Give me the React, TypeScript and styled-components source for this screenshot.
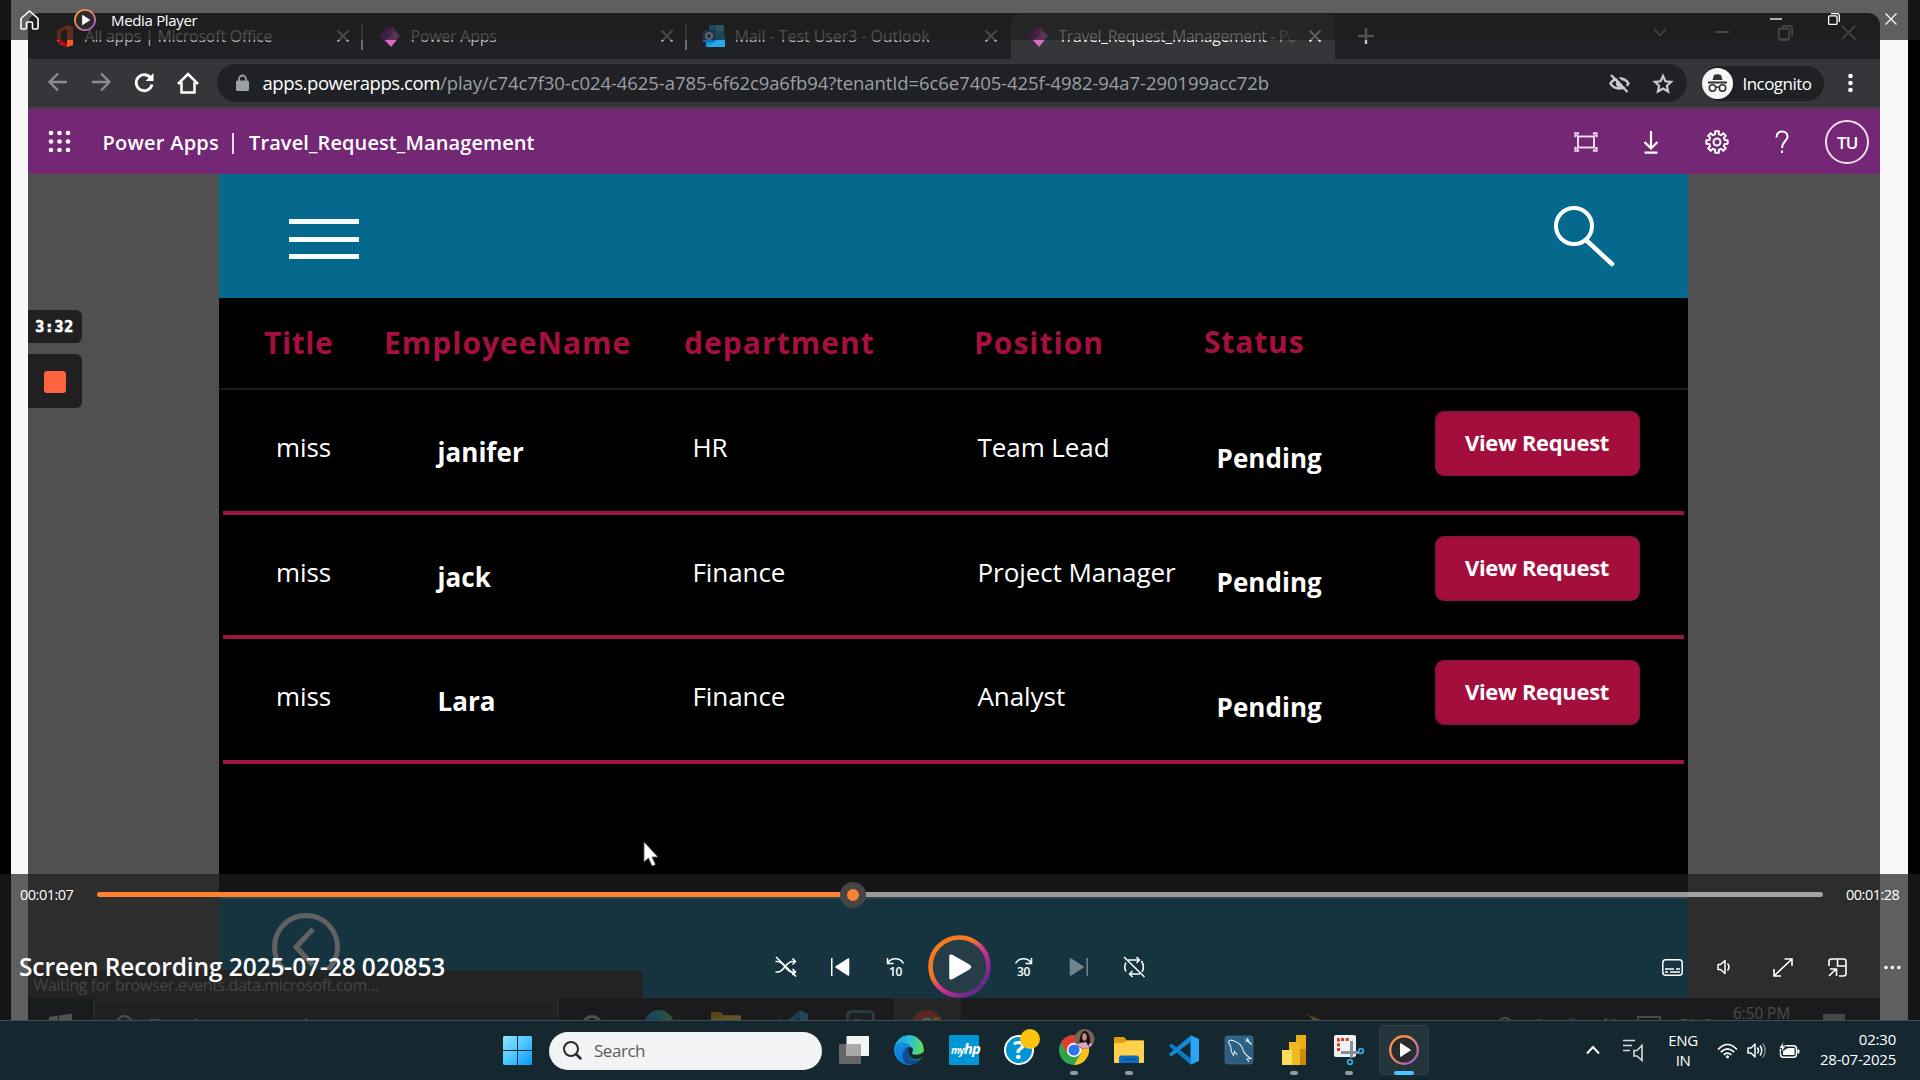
import React from "react";
import styled, { createGlobalStyle, css } from "styled-components";

const GlobalStyle = createGlobalStyle`
  html, body { margin: 0; padding: 0; background: #000; }
  * { box-sizing: border-box; }
  svg { display: block; flex: none; overflow: visible; }
  body { font-family: "Open Sans", "Noto Sans", sans-serif; }
`;

const Desktop = styled.div`
  width: 1920px;
  height: 1080px;
  display: flex;
  flex-direction: column;
  overflow: hidden;
  background: #000;
`;

/* ---------- Player window ---------- */

const PlayerWindow = styled.main`
  position: relative;
  height: 1020px;
  display: flex;
  justify-content: center;
  overflow: hidden;
  padding: 0 12px 0 11px;
`;

const VideoFrame = styled.div`
  flex: 1;
  background: #f8f8f8;
  padding: 13px 28px 0 16.5px;
`;

const Browser = styled.div`
  position: relative;
  height: 1007px;
  display: flex;
  flex-direction: column;
  overflow: hidden;
  border-radius: 12px 12px 0 0;
  background: #202124;
`;

const TabStrip = styled.div`
  height: 46px;
  display: flex;
  align-items: stretch;
  padding-left: 11px;
`;

const TabBox = styled.div<{ $active?: boolean; $divider?: boolean }>`
  width: 324px;
  display: flex;
  align-items: center;
  gap: 10px;
  padding: 0 14px 0 16px;
  border-radius: 12px 12px 0 0;
  background: ${(p) => (p.$active ? "#35363a" : "transparent")};
  ${(p) =>
    p.$divider &&
    css`
      background: linear-gradient(#6b6d70, #6b6d70) 100% 11px / 2px 26px no-repeat;
      border-radius: 0;
    `}
`;

const TabLabel = styled.span<{ $active?: boolean; $track: number }>`
  flex: 1;
  overflow: hidden;
  white-space: nowrap;
  font-size: 16px;
  line-height: 26px;
  letter-spacing: ${(p) => p.$track}px;
  color: ${(p) => (p.$active ? "#f1f3f4" : "#b4b8bd")};
  ${(p) => p.$active && "mask-image: linear-gradient(90deg, #000 88%, transparent);"}
`;

const StripTools = styled.div`
  flex: 1;
  display: flex;
  align-items: center;
  padding-left: 23px;
`;

const BrowserControls = styled.div`
  margin-left: auto;
  width: 252px;
  display: flex;
  justify-content: space-between;
  align-items: center;
  padding: 0 24px 8px 25px;
`;

const Toolbar = styled.div`
  height: 50px;
  display: flex;
  align-items: center;
  background: #35363a;
  border-bottom: 2px solid #47434b;
`;

const NavIcons = styled.div`
  width: 189px;
  display: flex;
  justify-content: space-between;
  padding: 0 18px 0 20px;
`;

const AddressBar = styled.div`
  width: 1470px;
  height: 38px;
  display: flex;
  align-items: center;
  border-radius: 19px;
  background: #202124;
  padding: 0 14px 0 19px;
  gap: 23px;
`;

const Url = styled.div`
  margin-left: -9px;
  flex: 1;
  white-space: nowrap;
  font-size: 18.5px;
  line-height: 28px;
  letter-spacing: -0.08px;
  color: #9aa0a6;
`;

const Host = styled.span`
  color: #fff;
  letter-spacing: -0.42px;
`;

const Incognito = styled.div`
  width: 122px;
  height: 35px;
  margin-left: 15px;
  display: flex;
  align-items: center;
  gap: 10px;
  border-radius: 18px;
  background: #202124;
  color: #fff;
  font-size: 17px;
  font-weight: 500;
  letter-spacing: -0.55px;
`;

const KebabSlot = styled.div`
  flex: 1;
  display: flex;
  justify-content: center;
  padding-right: 3px;
`;

const SuiteBar = styled.div`
  height: 65px;
  display: flex;
  align-items: center;
  padding: 1px 0 0 21px;
  background: #742774;
  color: #fff;
`;

const SuiteTitle = styled.div`
  display: flex;
  align-items: center;
  margin-left: 32px;
  padding-top: 2px;
  font-size: 20px;
  font-weight: 600;
  line-height: 28px;
  letter-spacing: 0.1px;
  white-space: nowrap;
`;

const ProductName = styled.span`
  letter-spacing: 0.25px;
`;

const SuiteDivider = styled.span`
  width: 2px;
  height: 21px;
  margin: 0 15px 0 13px;
  background: #e9d6e9;
`;

const SuiteActions = styled.div`
  margin-left: auto;
  display: grid;
  grid-template-columns: repeat(5, 65.3px);
  align-items: center;
  justify-items: center;
`;

const UserBadge = styled.div`
  width: 44px;
  height: 44px;
  border: 2px solid #f0dff0;
  border-radius: 50%;
  display: grid;
  place-items: center;
  font-size: 17px;
  font-weight: 600;
  letter-spacing: -0.8px;
`;

const AppStage = styled.div`
  height: 824px;
  display: flex;
  justify-content: center;
  padding: 0 192px 0 191.5px;
  background: #505050;
`;

const AppScreen = styled.div`
  flex: 1;
  display: flex;
  flex-direction: column;
  background: #000;
`;

const AppHeader = styled.div`
  height: 124px;
  display: flex;
  justify-content: space-between;
  align-items: flex-start;
  padding: 45px 73px 0 70px;
  background: #05698e;
`;

const Burger = styled.div`
  width: 70px;
  height: 40px;
  display: flex;
  flex-direction: column;
  justify-content: space-between;
`;

const BurgerLine = styled.span`
  height: 5px;
  background: #f8fbfc;
`;

const SearchGlyph = styled.div`
  margin-top: -14px;
`;

const ColumnHeads = styled.div`
  height: 92px;
  display: grid;
  grid-template-columns: 120px 300px 290px 230px 200px;
  padding: 25px 0 0 45px;
  border-bottom: 2px solid #181818;
`;

const ColumnHead = styled.div<{ $track: number; $raise?: boolean }>`
  font-size: 30px;
  font-weight: 700;
  line-height: 40px;
  letter-spacing: ${(p) => p.$track}px;
  margin-top: ${(p) => (p.$raise ? -1 : 0)}px;
  color: #a60f3f;
`;

const Gallery = styled.div`
  flex: 1;
  padding: 0 4px;
`;

const RequestRow = styled.div`
  height: 124.5px;
  display: grid;
  grid-template-columns: 161.500px 255px 285px 239px 219.500px 205px;
  align-items: start;
  padding-left: 53px;
  border-bottom: 4px solid #9c1540;
`;

const Cell = styled.div<{ $top: number; $bold?: boolean }>`
  padding-top: ${(p) => p.$top}px;
  font-size: 26px;
  line-height: 36px;
  font-weight: ${(p) => (p.$bold ? 700 : 400)};
  letter-spacing: ${(p) => (p.$bold ? 0.05 : -0.07)}px;
  white-space: nowrap;
  color: #fff;
`;

const ViewButton = styled.button`
  margin: 21px 0 0 -1px;
  width: 205px;
  height: 65px;
  border: 2px solid #8d1239;
  border-radius: 9px;
  background: #a40e3d;
  color: #fff;
  font: 700 22px/30px "Open Sans", sans-serif;
  letter-spacing: -0.33px;
  padding: 0 1px 3px 0;
`;

const AppFooter = styled.div`
  height: 101px;
  padding: 14px 0 0 53px;
  border-top: 2px solid #5b93a8;
  background: #056a8f;
`;

const StatusBubble = styled.div`
  position: absolute;
  left: 0;
  top: 957px;
  width: 615px;
  height: 28px;
  padding-left: 6px;
  border-radius: 0 6px 0 0;
  background: #2f3034;
  color: #9aa0a6;
  font-size: 16px;
  line-height: 30px;
  letter-spacing: -0.36px;
`;

const RecorderStack = styled.div`
  position: absolute;
  left: 0;
  top: 297px;
  display: flex;
  flex-direction: column;
  gap: 11px;
`;

const RecorderTile = styled.div<{ $h: number }>`
  width: 54px;
  height: ${(p) => p.$h}px;
  border-radius: 0 6px 6px 0;
  display: grid;
  place-items: center;
  background: #202020;
  color: #fff;
  font: 700 15px "DejaVu Sans Mono", monospace;
  letter-spacing: 0.6px;
  padding-top: 1px;
  -webkit-text-stroke: 0.6px #fff;
`;

const StopSquare = styled.span`
  width: 22px;
  height: 22px;
  border-radius: 3px;
  background: #ff623e;
`;

const MousePointer = styled.div`
  position: absolute;
  left: 615px;
  top: 828px;
`;

const InnerTaskbar = styled.div`
  height: 22px;
  overflow: hidden;
  background: #17171c;
`;

const InnerRow = styled.div`
  height: 54px;
  display: flex;
  align-items: center;
`;

const InnerStart = styled.div`
  width: 65px;
  display: flex;
  justify-content: center;
  align-items: center;
  align-self: stretch;
  background: #101a1b;
`;

const InnerSearch = styled.div`
  width: 466px;
  height: 52px;
  display: flex;
  align-items: center;
  gap: 14px;
  padding-left: 21px;
  border: 2px solid #444;
  background: #2b2b2b;
  color: #a8a8a8;
  font-size: 18px;
`;

const InnerCell = styled.div<{ $active?: boolean }>`
  width: 67px;
  height: 54px;
  display: grid;
  place-items: center;
  background: ${(p) => (p.$active ? "#3b3b3f" : "transparent")};
`;

const InnerTray = styled.div`
  flex: 1;
  height: 54px;
  display: flex;
  align-items: center;
  gap: 19px;
  padding-left: 342px;
  color: #b0b0b0;
  font-size: 16px;
`;

const InnerCloudSlot = styled.span`
  width: 136px;
`;

const InnerClock = styled.span`
  align-self: flex-start;
  margin: 2px 14px 0 2px;
  font-size: 15.5px;
  line-height: 26px;
  letter-spacing: -0.15px;
`;

/* ---------- Player chrome laid over the video ---------- */

const TitleOverlay = styled.header`
  position: absolute;
  inset: 0 0 auto 0;
  height: 40px;
  display: flex;
  align-items: center;
  padding: 0 23px 0 20px;
  background: rgba(30, 30, 30, 0.7);
  color: #fff;
`;

const AppName = styled.span`
  margin-left: 15px;
  font-size: 15px;
  line-height: 22px;
  letter-spacing: -0.33px;
`;

const LogoSlot = styled.span`
  margin-left: 35px;
`;

const CaptionButtons = styled.div`
  margin-left: auto;
  width: 127px;
  display: flex;
  justify-content: space-between;
  padding-bottom: 2px;
`;

const ControlsOverlay = styled.footer`
  position: absolute;
  inset: auto 0 0 0;
  height: 146px;
  display: flex;
  flex-direction: column;
  background: rgba(30, 30, 30, 0.7);
  color: #fff;
`;

const Timeline = styled.div`
  height: 41px;
  display: flex;
  align-items: center;
  justify-content: space-between;
  padding: 0 20px;
`;

const TimeText = styled.span`
  width: 77px;
  font-size: 14.5px;
  line-height: 20px;
  letter-spacing: -0.5px;

  &:last-child {
    width: 54px;
  }
`;

const Track = styled.div`
  width: 1726px;
  height: 5px;
  display: flex;
  align-items: center;
  margin-right: 23px;
`;

const Played = styled.div`
  height: 5px;
  border-radius: 3px 0 0 3px;
  background: #ff8232;
`;

const Thumb = styled.div`
  width: 26px;
  height: 26px;
  margin: 0 -13px;
  flex: none;
  z-index: 1;
  border: 7px solid #454545;
  border-radius: 50%;
  background: #ff8232;
`;

const Remaining = styled.div`
  flex: 1;
  height: 5px;
  border-radius: 0 3px 3px 0;
  background: rgba(255, 255, 255, 0.57);
`;

const TransportRow = styled.div`
  height: 104px;
  display: grid;
  grid-template-columns: 758px 403px 1fr;
  align-items: center;
`;

const MediaTitle = styled.h1`
  margin: 0;
  padding-left: 19px;
  font-size: 24.5px;
  font-weight: 600;
  line-height: 34px;
  letter-spacing: -0.1px;
  white-space: nowrap;
`;

const ButtonGroup = styled.div`
  display: flex;
  align-items: center;
  justify-content: flex-end;
`;

const ControlButton = styled.div<{ $wide?: boolean; $dim?: boolean }>`
  width: ${(p) => (p.$wide ? 73 : 55)}px;
  height: 64px;
  display: grid;
  place-items: center;
  opacity: ${(p) => (p.$dim ? 0.4 : 1)};
`;

/* ---------- Windows taskbar ---------- */

const Taskbar = styled.nav`
  height: 60px;
  display: flex;
  align-items: center;
  padding-left: 490px;
  border-top: 1px solid #3c4c52;
  background: #15282f;
  color: #fff;
`;

const TaskTile = styled.div`
  width: 55px;
  height: 59px;
  display: grid;
  grid-template-rows: 50px 4px;
  align-content: start;
  justify-items: center;
  align-items: center;
  padding-top: 4px;
`;

const ActiveTile = styled.div`
  width: 50px;
  height: 50px;
  border: 1px solid #2f3f45;
  border-radius: 5px;
  display: grid;
  place-items: center;
  background: #24343b;
`;

const Indicator = styled.span<{ $active?: boolean }>`
  width: ${(p) => (p.$active ? 20 : 8)}px;
  height: 4px;
  margin-top: -9px;
  border-radius: 2px;
  background: ${(p) => (p.$active ? "#4cc2ff" : "#949c9f")};
`;

const SearchPill = styled.div`
  width: 273px;
  height: 38px;
  margin: 0 4px;
  display: flex;
  align-items: center;
  gap: 12px;
  padding-left: 14px;
  border-radius: 19px;
  background: #f2f3f5;
  color: #5a5b5d;
  font-size: 17px;
  letter-spacing: -0.47px;
`;

const Tray = styled.div`
  margin-left: auto;
  width: 338px;
  display: flex;
  align-items: center;
  padding-right: 24px;
`;

const TrayItem = styled.div<{ $w: number }>`
  width: ${(p) => p.$w}px;
  display: grid;
  place-items: center;
`;

const Clock = styled.div`
  margin-left: auto;
  padding-bottom: 3px;
  font-size: 15px;
  line-height: 20px;
  letter-spacing: -0.22px;
  text-align: right;
  white-space: nowrap;
`;

const Language = styled.div`
  width: 42px;
  margin-right: 12px;
  padding-bottom: 2px;
  font-size: 15px;
  line-height: 20px;
  letter-spacing: -0.4px;
  text-align: center;
`;

/* ---------- Icons ---------- */

const Cross = ({ s = 12, c = "#fff", w = 1.3 }: { s?: number; c?: string; w?: number }) => (
  <svg width={s} height={s} viewBox="0 0 12 12">
    <path d="M.5.5l11 11M11.5.5l-11 11" stroke={c} strokeWidth={(w * 12) / s} fill="none" />
  </svg>
);

const Restore = ({ s = 12, c = "#fff", w = 1.3 }: { s?: number; c?: string; w?: number }) => (
  <svg width={s} height={s} viewBox="0 0 12 12" fill="none" stroke={c} strokeWidth={(w * 12) / s}>
    <rect x=".6" y="2.8" width="8.4" height="8.6" rx="1" />
    <path d="M3 .7h6.3a2 2 0 0 1 2 2v6.3" />
  </svg>
);

const OfficeIcon = () => (
  <svg width="20" height="22" viewBox="0 0 20 22">
    <path d="M12 0l6 2v18l-6 2-9-3.500 9 1V4.500L6 6v9l-4 2V5z" fill="#e64a19" />
    <path d="M12 0l6 2v18l-6 2z" fill="#ff5722" />
    <path d="M2 17l4-2 6 4.500V22z" fill="#c4001d" />
  </svg>
);

const PowerAppsIcon = () => (
  <svg width="22" height="22" viewBox="0 0 22 22">
    <path d="M9 0l9 9-8 11L0 11z" fill="#8a1d84" />
    <path d="M13 2l8 9-9 11-6-7 7-5z" fill="#d86bcb" />
    <path d="M13 2l-5 6 5 4 2-9z" fill="#a93ba1" />
  </svg>
);

const OutlookIcon = () => (
  <svg width="22" height="22" viewBox="0 0 22 22">
    <rect x="6" y="0" width="15" height="12" fill="#28a8ea" />
    <rect x="13" y="0" width="8" height="6" fill="#50d9ff" />
    <path d="M3 11l19-1v12H3z" fill="#1490df" />
    <path d="M3 22L22 11v11z" fill="#28a8ea" />
    <rect x="0" y="5" width="12" height="12" rx="1" fill="#0f6cbd" />
    <circle cx="6" cy="11" r="3" fill="none" stroke="#fff" strokeWidth="2" />
  </svg>
);

const Arrow = ({ flip = false }: { flip?: boolean }) => (
  <svg width="20" height="20" viewBox="0 0 20 20" transform={flip ? "scale(-1 1)" : undefined}>
    <path d="M19 10H2M10 1.500L1.500 10l8.500 8.500" stroke="#8a8c90" strokeWidth="2.400" fill="none" />
  </svg>
);

const Reload = () => (
  <svg width="20" height="20" viewBox="0 0 20 20">
    <path d="M17 6.500A8 8 0 1 0 18 12.500" stroke="#fff" strokeWidth="2.800" fill="none" />
    <path d="M19.500 1v8h-8z" fill="#fff" />
  </svg>
);

const ChromeHome = () => (
  <svg width="22" height="22" viewBox="0 0 22 22">
    <path d="M4.500 10v10.500h13V10M1 12L11 2l10 10" stroke="#fff" strokeWidth="2.500" fill="none" />
  </svg>
);

const Lock = () => (
  <svg width="13" height="16" viewBox="0 0 13 16">
    <rect x="0" y="5.500" width="13" height="10.500" rx="1.500" fill="#9aa0a6" />
    <path d="M3 6V4a3.500 3.500 0 0 1 7 0v2" stroke="#9aa0a6" strokeWidth="1.800" fill="none" />
  </svg>
);

const EyeOff = () => (
  <svg width="21" height="19" viewBox="0 0 21 19" fill="none" stroke="#c8cacd">
    <path d="M1.500 9.500C5 3 16 3 19.500 9.500 16 16 5 16 1.500 9.500z" strokeWidth="2.600" />
    <circle cx="10.500" cy="9.500" r="3.200" fill="#c8cacd" />
    <path d="M4 -1l17 18" stroke="#202124" strokeWidth="2.500" />
    <path d="M2 1l16.500 17" strokeWidth="2.400" />
  </svg>
);

const Star = () => (
  <svg width="20" height="19" viewBox="0 0 20 19">
    <path d="M10 2l2.400 5.300 5.700.6-4.200 3.900 1.200 5.700L10 14.600l-5.100 2.900 1.200-5.700L1.900 7.900l5.700-.6z" fill="none" stroke="#c8cacd" strokeWidth="2.200" />
  </svg>
);

const IncognitoIcon = () => (
  <svg width="31" height="31" viewBox="0 0 31 31">
    <circle cx="15.500" cy="15.500" r="15.500" fill="#f5f6f7" />
    <path d="M10.500 12l1.500-5q3.500-1.500 7 0l1.500 5z" fill="#303134" />
    <path d="M6 14.500h19" stroke="#303134" strokeWidth="2" />
    <g fill="none" stroke="#303134" strokeWidth="1.500">
      <circle cx="10.500" cy="20" r="3.200" />
      <circle cx="20.500" cy="20" r="3.200" />
      <path d="M13.700 19.500q1.800-1 3.600 0" />
    </g>
  </svg>
);

const Waffle = () => (
  <svg width="22" height="22" viewBox="0 0 22 22" fill="#fff">
    {[2, 10.5, 19].map((y) => [2, 10.5, 19].map((x) => <circle key={`${x}-${y}`} cx={x} cy={y} r="2.300" />))}
  </svg>
);

const FitScreen = () => (
  <svg width="24" height="20" viewBox="0 0 24 20" fill="none" stroke="#f3dff3" strokeWidth="1.900">
    <rect x="4" y="4.500" width="16" height="11" />
    <path d="M1 5l4-4M19 1l4 4M23 15l-4 4M5 19l-4-4M1 5V1h4M19 1h4v4M23 15v4h-4M5 19H1v-4" strokeWidth="1.300" />
  </svg>
);

const Download = () => (
  <svg width="16" height="23" viewBox="0 0 16 23" fill="none" stroke="#fff" strokeWidth="2.200">
    <path d="M8 0v17M1.500 11L8 17.500l6.500-6.500M1.500 21.700h13" />
  </svg>
);

const gearPath = (() => {
  const pts: string[] = [];
  for (let i = 0; i < 8; i++) {
    const base = (i * Math.PI) / 4;
    [
      [-0.24, 8],
      [-0.17, 10.8],
      [0.17, 10.8],
      [0.24, 8],
    ].forEach(([d, r]) => pts.push(`${(12 + r * Math.sin(base + d)).toFixed(2)} ${(12 - r * Math.cos(base + d)).toFixed(2)}`));
  }
  return `M${pts.join("L")}Z`;
})();

const Gear = () => (
  <svg width="24" height="24" viewBox="0 0 24 24" fill="none" stroke="#fff" strokeWidth="2" strokeLinejoin="round">
    <path d={gearPath} />
    <circle cx="12" cy="12" r="3.500" />
  </svg>
);

const Help = () => (
  <svg width="14" height="24" viewBox="0 0 14 24" fill="none" stroke="#fff" strokeWidth="2">
    <path d="M1.500 7.500C1 -.5 13-.5 12.500 7c-.3 4-5.500 4.500-5.500 11" />
    <path d="M7 20.500v2.500" />
  </svg>
);

const BigSearch = () => (
  <svg width="62" height="62" viewBox="0 0 62 62" fill="none" stroke="#fff" strokeWidth="4">
    <circle cx="21" cy="21" r="18" />
    <path d="M33 35l26 24" strokeWidth="4.500" strokeLinecap="round" />
  </svg>
);

const BackCircle = () => (
  <svg width="68" height="68" viewBox="0 0 68 68" fill="none" stroke="#fff" strokeWidth="5">
    <circle cx="34" cy="34" r="31.500" />
    <path d="M41 16L24 34l17 18" />
  </svg>
);

const PointerIcon = () => (
  <svg width="16" height="26" viewBox="0 0 16 26">
    <path d="M1 1v20l4.500-4 3.500 8 3.500-1.500-3.500-7.500h6z" fill="#fff" stroke="#555" strokeWidth=".8" />
  </svg>
);

const HomeOutline = () => (
  <svg width="19" height="20" viewBox="0 0 19 20">
    <path d="M1 8.500L9.500 1 18 8.500V18q0 1-1 1h-3.500q-1 0-1-1v-5q0-1-1-1h-4q-1 0-1 1v5q0 1-1 1H2q-1 0-1-1z" fill="none" stroke="#fff" strokeWidth="1.600" strokeLinejoin="round" />
  </svg>
);

const PlayerLogo = ({ s, id }: { s: number; id: string }) => (
  <svg width={s} height={s} viewBox="0 0 30 30">
    <defs>
      <linearGradient id={id} x1="0" y1="0" x2="1" y2="1">
        <stop offset="0" stopColor="#ff9a35" />
        <stop offset=".5" stopColor="#e0846f" />
        <stop offset="1" stopColor="#9055d8" />
      </linearGradient>
    </defs>
    <circle cx="15" cy="15" r="13.800" fill="#2b2b2c" stroke={`url(#${id})`} strokeWidth="2.400" />
    <path d="M11.500 8.500l10 6.500-10 6.500z" fill="#fff" stroke="#fff" strokeLinejoin="round" />
  </svg>
);

const Shuffle = () => (
  <svg width="22" height="20" viewBox="0 0 22 20" fill="none" stroke="#fff" strokeWidth="1.500">
    <path d="M.5 4.500h2c7 0 8 10.500 15 10.500h3M.5 15h2c7 0 8-10.500 15-10.500h3M17.500 1.500l3 3-3 3M17.500 12l3 3-3 3" />
    <path d="M1 0l20 19.500" strokeWidth="1.600" />
  </svg>
);

const Previous = ({ flip = false }: { flip?: boolean }) => (
  <svg width="19" height="18" viewBox="0 0 19 18" transform={flip ? "scale(-1 1)" : undefined}>
    <rect width="1.500" height="18" fill="#fff" />
    <path d="M17.500 1v16L5 9z" fill="#fff" stroke="#fff" strokeWidth="1.500" strokeLinejoin="round" />
  </svg>
);

const SkipText = styled.text`
  font: 600 12px "Open Sans", sans-serif;
  letter-spacing: -0.3px;
  fill: #fff;
  text-anchor: middle;
`;

const Skip = ({ label, flip = false }: { label: string; flip?: boolean }) => (
  <svg width="19" height="20" viewBox="0 0 19 20">
    <path
      d="M1.500 1v5.500h6M1.500 6.500C5 .3 14 .3 17.500 6.500"
      transform={flip ? "translate(19 0) scale(-1 1)" : undefined}
      fill="none"
      stroke="#fff"
      strokeWidth="1.500"
    />
    <SkipText x="9.500" y="18.600">{label}</SkipText>
  </svg>
);

const PlayRing = () => (
  <svg width="64" height="64" viewBox="0.500 0.500 64 64">
    <defs>
      <linearGradient id="ring" x1=".2" y1=".15" x2=".85" y2=".85">
        <stop offset=".28" stopColor="#f57a20" />
        <stop offset=".52" stopColor="#d83a8a" />
        <stop offset=".7" stopColor="#b52a90" />
        <stop offset="1" stopColor="#5f2d88" />
      </linearGradient>
    </defs>
    <circle cx="32" cy="32" r="29" fill="#263d48" stroke="url(#ring)" strokeWidth="4.600" />
    <path d="M22.500 22v21q0 2 2 1l17.500-10q2-1.500 0-3L24.500 21q-2-1-2 1z" fill="#fff" stroke="#fff" strokeWidth="1.500" />
  </svg>
);

const RepeatOff = () => (
  <svg width="22" height="22" viewBox="0 0 22 22" fill="none" stroke="#fff" strokeWidth="1.500">
    <path d="M5 4h11M13.500 1l3 3-3 3M17 18H7M9.500 15l-3 3 3 3M3 6.500Q.5 11 3 15.500M18.500 5q3.500 6 .5 11" />
    <path d="M1 1l20.500 20" />
  </svg>
);

const Captions = () => (
  <svg width="21" height="17" viewBox="0 0 21 17" fill="none" stroke="#fff" strokeWidth="1.500">
    <rect x=".8" y=".8" width="19.400" height="15.400" rx="3" />
    <path d="M3 10h9M14 10h4M3 13h3M8 13h10" strokeWidth="1.700" />
  </svg>
);

const Volume = () => (
  <svg width="14" height="16" viewBox="0 0 14 16" fill="none" stroke="#fff" strokeWidth="1.500" transform="translate(-4 0)">
    <path d="M1 5.500h2.500L8 1.500v13l-4.500-4H1zM10.500 4.500q3 3.500 0 7" strokeLinejoin="round" />
  </svg>
);

const Expand = () => (
  <svg width="20" height="19" viewBox="0 0 20 19" fill="none" stroke="#fff" strokeWidth="1.600">
    <path d="M1.500 17.500l17-16M11.500 1h7.500v7M1 11v7h7" />
  </svg>
);

const MiniPlayer = () => (
  <svg width="19" height="19" viewBox="0 0 19 19" fill="none" stroke="#fff" strokeWidth="1.600">
    <path d="M1 8V3.500Q1 1 3.500 1h12Q18 1 18 3.500v12Q18 18 15.500 18H11M9.500 1v7H18M1 18l7-7M2 11h6.500v7" />
  </svg>
);

const Dots = ({ vertical = false, c = "#fff", r = 1.8 }: { vertical?: boolean; c?: string; r?: number }) => (
  <svg width={vertical ? 5 : 17} height={vertical ? 20 : 5}>
    {[0, 1, 2].map((i) => (
      <circle key={i} cx={vertical ? 2.5 : 2 + i * 6.4} cy={vertical ? 3 + i * 7 : 2.5} r={r} fill={c} />
    ))}
  </svg>
);

const WindowsLogo = () => (
  <svg width="29" height="29" viewBox="0 0 29 29">
    <defs>
      <linearGradient id="win" x1="0" y1="0" x2="1" y2="1">
        <stop offset="0" stopColor="#8fe3ff" />
        <stop offset=".5" stopColor="#4cc8ff" />
        <stop offset="1" stopColor="#0a95ff" />
      </linearGradient>
    </defs>
    <path d="M1 0h13v14H0V1zM15 0h13l1 1v13H15zM0 15h14v14H1l-1-1zM15 15h14v13l-1 1H15z" fill="url(#win)" />
  </svg>
);

const Magnifier = ({ c = "#2b2b2b", s = 19 }: { c?: string; s?: number }) => (
  <svg width={s} height={s} viewBox="0 0 19 19" fill="none" stroke={c} strokeWidth="2">
    <circle cx="8" cy="8" r="7" />
    <path d="M13 13l4.500 4.500" strokeWidth="2.500" strokeLinecap="round" />
  </svg>
);

const TaskView = () => (
  <svg width="30" height="28" viewBox="0 0 30 28">
    <rect x="0" y="8" width="22" height="20" rx="1" fill="#666" />
    <rect x="7.500" y="0" width="22.500" height="20" rx="1" fill="#f4f4f4" />
    <path d="M7.500 8H22v12H7.500z" fill="#a9a9a9" />
  </svg>
);

const Edge = ({ id }: { id: string }) => (
  <svg width="30" height="30" viewBox="0 0 30 30">
    <defs>
      <linearGradient id={`${id}a`} x1="0" y1=".3" x2="1" y2=".5">
        <stop offset="0" stopColor="#1a9fe8" />
        <stop offset=".5" stopColor="#2bc0d0" />
        <stop offset="1" stopColor="#66e04e" />
      </linearGradient>
      <linearGradient id={`${id}b`} x1="0" y1="0" x2=".6" y2="1">
        <stop offset="0" stopColor="#1691dc" />
        <stop offset="1" stopColor="#0a6fd8" />
      </linearGradient>
      <clipPath id={`${id}c`}>
        <circle cx="15" cy="15" r="15" />
      </clipPath>
    </defs>
    <g clipPath={`url(#${id}c)`}>
      <circle cx="15" cy="15" r="15" fill={`url(#${id}a)`} />
      <path d="M.2 13C2 6.500 13 5.500 17 12c-5 0-7 5-4 9.500 3 4 9 5 14.500 1.500C24 29 18 30.500 13 30 5 29 0 22 .2 13z" fill={`url(#${id}b)`} />
      <path d="M16 11.500c-8 1-10 11-4 17 7 3 13 0 15.500-5.500-5 3-10 1.500-12-1.500-2-3-1-6 .5-7z" fill="#114b94" />
      <path d="M15.500 12.500c2-1 4 .5 3.500 3-.3 1.500-1.500 2-1 3 2 2.500 9 1.500 12-2.500v5l-2.500 1.700c-5 2.500-9.500 1.800-12-1.700-2-3-1.500-7 0-8.500z" fill="#15282f" />
    </g>
  </svg>
);

const HpText = styled.text`
  font: italic 700 15px "Open Sans", sans-serif;
  letter-spacing: -0.8px;
  fill: #fff;
`;

const HpSmall = styled.tspan`
  font-size: 10px;
`;

const MyHp = () => (
  <svg width="30" height="30" viewBox="0 0 30 30">
    <rect width="30" height="30" rx="1.500" fill="#0096d6" />
    <HpText x="2" y="19">
      <HpSmall>my</HpSmall>hp
    </HpText>
  </svg>
);

const QuestionText = styled.text`
  font: 700 25px "Open Sans", sans-serif;
  fill: #fff;
  text-anchor: middle;
`;

const HpHelp = () => (
  <svg width="30" height="30" viewBox="0 0 30 30">
    <circle cx="15" cy="15" r="14" fill="#0096d6" stroke="#fff" strokeWidth="2" />
    <QuestionText x="15" y="24">?</QuestionText>
    <circle cx="26" cy="4" r="10" fill="#ffc20e" />
  </svg>
);

const Chrome = ({ avatar = false }: { avatar?: boolean }) => (
  <svg width="30" height="30" viewBox="0 0 30 30">
    <circle cx="15" cy="15" r="15" fill="#2fa44c" />
    <path d="M2 7.500A15 15 0 0 1 28 7.500H15L8.500 18.700z" fill="#e33b2e" />
    <path d="M28 7.500A15 15 0 0 1 15 30l6.500-11.200L21.500 7.500z" fill="#fbc116" />
    <circle cx="15" cy="15" r="7.200" fill="#fff" />
    <circle cx="15" cy="15" r="5.600" fill="#2f74e8" />
    {avatar && (
      <g>
        <circle cx="25.500" cy="4" r="10" fill="#7d6056" />
        <path d="M20.500 12c-.5-6 .5-14 4.500-16 5-.5 7 7 6 16z" fill="#17110f" />
        <ellipse cx="25.500" cy="2" rx="2.300" ry="3.800" fill="#b98f7e" />
        <path d="M17.500 9.500q8-4 16-.5-6.500 9-16 .5z" fill="#d9a6c4" />
        <path d="M28 0q3 5 2 11l-2-2z" fill="#17110f" />
      </g>
    )}
  </svg>
);

const Folder = () => (
  <svg width="30" height="26" viewBox="0 0 30 26">
    <path d="M0 1q0-1 1-1h9l3 3.500h16q1 0 1 1V12H0z" fill="#e0a012" />
    <path d="M0 6h10l3-2.500h16q1 0 1 1V25q0 1-1 1H1q-1 0-1-1z" fill="#ffd04a" />
    <path d="M5 26v-5q0-2.500 2.500-2.500h15Q25 18.500 25 21v5z" fill="#0f6cbd" />
    <path d="M9 22.300h12" stroke="#094a8a" strokeWidth="1.200" />
  </svg>
);

const VsCode = () => (
  <svg width="30" height="30" viewBox="0 0 30 30">
    <path d="M2.500 8.500L21.500 23v6.500L.5 11.500q-.8-1 0-1.500z" fill="#0a7ac8" />
    <path d="M2.500 21.500L21.500 7V.5L.5 18.500q-.8 1 0 1.500z" fill="#1089dc" />
    <path d="M21.500.2L30 4v22l-8.500 3.800z" fill="#28a5f5" />
  </svg>
);

const MySql = () => (
  <svg width="28" height="28" viewBox="0 0 28 28">
    <defs>
      <linearGradient id="sql" x1="0" y1="0" x2="0" y2="1">
        <stop offset="0" stopColor="#2c6387" />
        <stop offset="1" stopColor="#2c5a7c" />
      </linearGradient>
    </defs>
    <rect width="28" height="28" rx="2.500" fill="url(#sql)" stroke="#487b9b" strokeWidth=".6" />
    <path d="M3.500 5.500Q5 3 9 5c5 1.500 8 5 9 9 1 3 4 6 8 8.500l-4 .5 2 3M3.500 5.500c0 2.500 2.500 3.500 2.500 7s1 5 2.500 7l1-4 3 3.500" fill="none" stroke="#dbe8f0" strokeWidth="1.100" />
    <path d="M19 2c1 3 2 4 4 4l3 3 1-1-3-3c0-2-1-3-3-3l1 2-1 1z" fill="#e8eef2" />
  </svg>
);

const PowerBi = () => (
  <svg width="24" height="30" viewBox="0 0 24 30">
    <path d="M14 0h10v30H14z" fill="#d08a0b" />
    <path d="M14 0h10v14H14z" fill="#e8ad18" />
    <path d="M7 7h11v23H7z" fill="#eebb25" />
    <path d="M0 15h10v15H0z" fill="#fadb5c" />
  </svg>
);

const Snip = () => (
  <svg width="30" height="30" viewBox="0 0 30 30">
    <rect x="0" y="0" width="22" height="22" rx="2" fill="#eff1f4" />
    <path d="M4.500 16V4.500H16" fill="none" stroke="#d83b12" strokeWidth="3" strokeDasharray="3 1.700" />
    <path d="M7 17.500h18M17.500 6v17" stroke="#87909a" strokeWidth="3" />
    <circle cx="27" cy="16" r="2.300" fill="none" stroke="#2ea7e8" strokeWidth="1.800" />
    <circle cx="16" cy="27" r="2.300" fill="none" stroke="#2ea7e8" strokeWidth="1.800" />
  </svg>
);

const Chevron = ({ up = false, s = 14, c = "#fff", w = 2 }: { up?: boolean; s?: number; c?: string; w?: number }) => (
  <svg width={s} height={s * 0.6} viewBox="0 0 14 8.400">
    <path d={up ? "M1 7.500l6-6.500 6 6.500" : "M1 1l6 6.500L13 1"} fill="none" stroke={c} strokeWidth={w} />
  </svg>
);

const ListSpeaker = () => (
  <svg width="20" height="23" viewBox="0 0 20 23" fill="none" stroke="#d5dadc" strokeWidth="1.600">
    <path d="M0 1.500h12M0 6.500h9M0 11.500h7" />
    <path d="M11 11.500h3l5-5v15l-5-4.500h-3z" />
  </svg>
);

const Wifi = () => (
  <svg width="21" height="16" viewBox="0 0 21 16" fill="none" stroke="#fff" strokeWidth="1.700">
    <path d="M1 6.500Q10.500-3.500 20 6.500M3.800 9.200q6.700-6.500 13.400 0M6.700 11.800q3.800-3.500 7.600 0" />
    <circle cx="10.500" cy="13.800" r="1.500" fill="#fff" stroke="none" />
  </svg>
);

const TrayVolume = () => (
  <svg width="20" height="17" viewBox="0 0 20 17" fill="none" stroke="#fff" strokeWidth="1.500">
    <path d="M1 6h3l4-4v13l-4-4H1zM10.500 5.500q2 3 0 6M13 3.500q3.500 5 0 10" strokeLinejoin="round" />
    <path d="M15.700 1.500q5 7 0 14" stroke="#7f8a8e" />
  </svg>
);

const Battery = () => (
  <svg width="21" height="17" viewBox="0 0 21 17">
    <rect x="1.500" y="3.800" width="16" height="11.500" rx="3" fill="none" stroke="#fff" strokeWidth="1.500" />
    <path d="M18.500 7.500h1q1 0 1 1v2q0 1-1 1h-1z" fill="#fff" />
    <path d="M4 13V9l5-3h6.500v7z" fill="#fff" />
    <path d="M4.500-1L0 6.500h3L2 11l5-7H4z" fill="#fff" stroke="#15282f" strokeWidth=".8" />
  </svg>
);

const OldWindows = () => (
  <svg width="23" height="20" viewBox="0 0 23 20" fill="#c8c8c8">
    <path d="M0 2l9-1.500V10H0zM10 .4L23-1.500V10H10zM0 11h9v9l-9-1zM10 11h13v10l-13-1.500z" />
  </svg>
);

const TerminalIcon = () => (
  <svg width="29" height="30" viewBox="0 0 29 30">
    <rect x="1.500" y="1.500" width="26" height="27" rx="4" fill="#1c2b30" stroke="#4b93a8" strokeWidth="2.500" />
    <rect x="7" y="9" width="9" height="12" rx="3" fill="#8a9a9e" />
  </svg>
);

/* ---------- Data ---------- */

const heads = [
  { label: "Title", track: 0.6 },
  { label: "EmployeeName", track: 1.0 },
  { label: "department", track: 1.05 },
  { label: "Position", track: 1.0 },
  { label: "Status", track: 0.85, raise: true },
];

const requests = [
  { title: "miss", name: "janifer", dept: "HR", position: "Team Lead", status: "Pending" },
  { title: "miss", name: "jack", dept: "Finance", position: "Project Manager", status: "Pending" },
  { title: "miss", name: "Lara", dept: "Finance", position: "Analyst", status: "Pending" },
];

const tabs = [
  { label: "All apps | Microsoft Office", icon: <OfficeIcon />, track: -0.24, divider: true },
  { label: "Power Apps", icon: <PowerAppsIcon />, track: -0.26, divider: true },
  { label: "Mail - Test User3 - Outlook", icon: <OutlookIcon />, track: -0.08 },
  { label: "Travel_Request_Management - Power Apps", icon: <PowerAppsIcon />, track: -0.44, active: true },
];

const tasks = [
  { id: "view", icon: <TaskView /> },
  { id: "edge", icon: <Edge id="edge" /> },
  { id: "hp", icon: <MyHp /> },
  { id: "help", icon: <HpHelp /> },
  { id: "chrome", icon: <Chrome avatar />, running: true },
  { id: "files", icon: <Folder />, running: true },
  { id: "code", icon: <VsCode /> },
  { id: "sql", icon: <MySql /> },
  { id: "bi", icon: <PowerBi />, running: true },
  { id: "snip", icon: <Snip />, running: true },
];

const playedPercent = 43.78;

/* ---------- Sections ---------- */

const BrowserChrome = () => (
  <>
    <TabStrip>
      {tabs.map((t) => (
        <TabBox key={t.label} $active={t.active} $divider={t.divider}>
          {t.icon}
          <TabLabel $active={t.active} $track={t.track}>{t.label}</TabLabel>
          <Cross s={12} c={t.active ? "#f1f3f4" : "#a9adb2"} w={1.9} />
        </TabBox>
      ))}
      <StripTools>
        <svg width="16" height="16" viewBox="0 0 16 16">
          <path d="M8 0v16M0 8h16" stroke="#c4c7ca" strokeWidth="2.400" />
        </svg>
        <BrowserControls>
          <Chevron c="#a0a2a4" w={1.5} />
          <svg width="14" height="2"><path d="M0 1h14" stroke="#a0a2a4" strokeWidth="2" /></svg>
          <Restore s={15} c="#a0a2a4" w={1.8} />
          <Cross s={15} c="#a0a2a4" w={1.6} />
        </BrowserControls>
      </StripTools>
    </TabStrip>
    <Toolbar>
      <NavIcons>
        <Arrow />
        <Arrow flip />
        <Reload />
        <ChromeHome />
      </NavIcons>
      <AddressBar>
        <Lock />
        <Url>
          <Host>apps.powerapps.com</Host>
          /play/c74c7f30-c024-4625-a785-6f62c9a6fb94?tenantId=6c6e7405-425f-4982-94a7-290199acc72b
        </Url>
        <EyeOff />
        <Star />
      </AddressBar>
      <Incognito>
        <IncognitoIcon />
        Incognito
      </Incognito>
      <KebabSlot>
        <Dots vertical r={2.3} />
      </KebabSlot>
    </Toolbar>
    <SuiteBar>
      <Waffle />
      <SuiteTitle>
        <ProductName>Power Apps</ProductName>
        <SuiteDivider />
        Travel_Request_Management
      </SuiteTitle>
      <SuiteActions>
        <FitScreen />
        <Download />
        <Gear />
        <Help />
        <UserBadge>TU</UserBadge>
      </SuiteActions>
    </SuiteBar>
  </>
);

const TravelApp = () => (
  <AppStage>
    <AppScreen>
      <AppHeader>
        <Burger>
          <BurgerLine />
          <BurgerLine />
          <BurgerLine />
        </Burger>
        <SearchGlyph>
          <BigSearch />
        </SearchGlyph>
      </AppHeader>
      <ColumnHeads>
        {heads.map((h) => (
          <ColumnHead key={h.label} $track={h.track} $raise={h.raise}>{h.label}</ColumnHead>
        ))}
      </ColumnHeads>
      <Gallery>
        {requests.map((r) => (
          <RequestRow key={r.name}>
            <Cell $top={39}>{r.title}</Cell>
            <Cell $top={44} $bold>{r.name}</Cell>
            <Cell $top={39}>{r.dept}</Cell>
            <Cell $top={39}>{r.position}</Cell>
            <Cell $top={49.5} $bold>{r.status}</Cell>
            <ViewButton>View Request</ViewButton>
          </RequestRow>
        ))}
      </Gallery>
      <AppFooter>
        <BackCircle />
      </AppFooter>
    </AppScreen>
  </AppStage>
);

const RecordedTaskbar = () => (
  <InnerTaskbar>
    <InnerRow>
      <InnerStart><OldWindows /></InnerStart>
      <InnerSearch>
        <Magnifier c="#b8b8b8" s={20} />
        Type here to search
      </InnerSearch>
      <InnerCell>
        <svg width="22" height="22"><circle cx="11" cy="11" r="8.500" fill="none" stroke="#c0c0c0" strokeWidth="3" /></svg>
      </InnerCell>
      <InnerCell><Edge id="oldedge" /></InnerCell>
      <InnerCell><Folder /></InnerCell>
      <InnerCell><VsCode /></InnerCell>
      <InnerCell><TerminalIcon /></InnerCell>
      <InnerCell $active><Chrome /></InnerCell>
      <InnerTray>
        <svg width="20" height="24" viewBox="0 0 20 24"><path d="M1 0c8 3 12 10 8 18 8 0 11-6 11-10z" fill="#d9c81e" /></svg>
        <InnerCloudSlot />
        <svg width="16" height="20"><circle cx="8" cy="10" r="7" fill="none" stroke="#aaa" strokeWidth="2" /></svg>
        <svg width="14" height="14"><circle cx="7" cy="7" r="6" fill="#888" /></svg>
        <svg width="14" height="14"><circle cx="7" cy="7" r="7" fill="#2b6cb0" /></svg>
        <TrayVolume />
        <svg width="24" height="18"><rect x="1" y="1" width="22" height="15" fill="none" stroke="#aaa" strokeWidth="2" /></svg>
        ENG
        <InnerClock>6:50 PM</InnerClock>
        <svg width="22" height="22"><path d="M0 0h22v17H11l-5 5v-5H0z" fill="#aaa" /></svg>
      </InnerTray>
    </InnerRow>
  </InnerTaskbar>
);

export default function App() {
  return (
    <Desktop>
      <GlobalStyle />
      <PlayerWindow>
        <VideoFrame>
          <Browser>
            <BrowserChrome />
            <TravelApp />
            <RecordedTaskbar />
            <StatusBubble>Waiting for browser.events.data.microsoft.com...</StatusBubble>
            <RecorderStack>
              <RecorderTile $h={33}>3:32</RecorderTile>
              <RecorderTile $h={54}><StopSquare /></RecorderTile>
            </RecorderStack>
            <MousePointer><PointerIcon /></MousePointer>
          </Browser>
        </VideoFrame>

        <TitleOverlay>
          <HomeOutline />
          <LogoSlot><PlayerLogo s={22} id="logoTop" /></LogoSlot>
          <AppName>Media Player</AppName>
          <CaptionButtons>
            <svg width="12" height="12"><path d="M0 6h12" stroke="#fff" strokeWidth="1.300" /></svg>
            <Restore />
            <Cross />
          </CaptionButtons>
        </TitleOverlay>

        <ControlsOverlay>
          <Timeline>
            <TimeText>00:01:07</TimeText>
            <Track>
              <Played style={{ width: `${playedPercent}%` }} />
              <Thumb />
              <Remaining />
            </Track>
            <TimeText>00:01:28</TimeText>
          </Timeline>
          <TransportRow>
            <MediaTitle>Screen Recording 2025-07-28 020853</MediaTitle>
            <ButtonGroup>
              <ControlButton><Shuffle /></ControlButton>
              <ControlButton><Previous /></ControlButton>
              <ControlButton><Skip label="10" /></ControlButton>
              <ControlButton $wide><PlayRing /></ControlButton>
              <ControlButton><Skip label="30" flip /></ControlButton>
              <ControlButton $dim><Previous flip /></ControlButton>
              <ControlButton><RepeatOff /></ControlButton>
            </ButtonGroup>
            <ButtonGroup>
              <ControlButton><Captions /></ControlButton>
              <ControlButton><Volume /></ControlButton>
              <ControlButton><Expand /></ControlButton>
              <ControlButton><MiniPlayer /></ControlButton>
              <ControlButton><Dots /></ControlButton>
            </ButtonGroup>
          </TransportRow>
        </ControlsOverlay>
      </PlayerWindow>

      <Taskbar>
        <TaskTile><WindowsLogo /></TaskTile>
        <SearchPill>
          <Magnifier />
          Search
        </SearchPill>
        {tasks.map((t) => (
          <TaskTile key={t.id}>
            {t.icon}
            {t.running && <Indicator />}
          </TaskTile>
        ))}
        <TaskTile>
          <ActiveTile><PlayerLogo s={30} id="logoTask" /></ActiveTile>
          <Indicator $active />
        </TaskTile>
        <Tray>
          <TrayItem $w={22}><Chevron up /></TrayItem>
          <TrayItem $w={58}><ListSpeaker /></TrayItem>
          <Language>ENG<br />IN</Language>
          <TrayItem $w={22}><Wifi /></TrayItem>
          <TrayItem $w={38}><TrayVolume /></TrayItem>
          <TrayItem $w={26}><Battery /></TrayItem>
          <Clock>02:30<br />28-07-2025</Clock>
        </Tray>
      </Taskbar>
    </Desktop>
  );
}
